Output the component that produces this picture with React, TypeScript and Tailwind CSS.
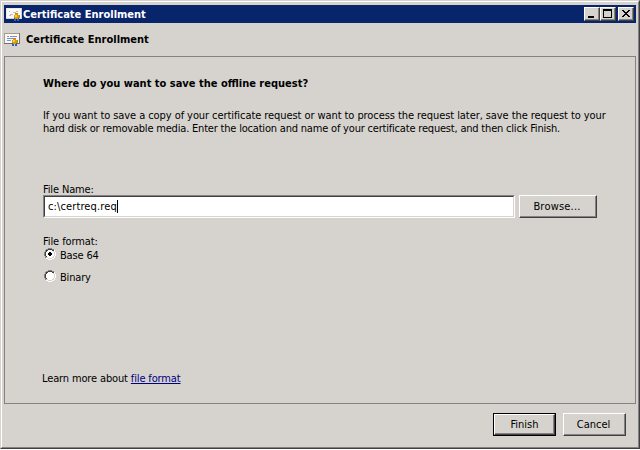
import React from "react";

function CertificateIcon({ framed = false, className = "" }: { framed?: boolean; className?: string }) {
  return (
    <svg viewBox="0 0 16 15" width="16" height="15" shapeRendering="crispEdges" className={`shrink-0 ${className}`}>
      <rect x="0" y="1" width="16" height="11" fill={framed ? "#777065" : "#d8d0c8"} />
      <rect x="0" y="1" width="15" height="10" fill={framed ? "#a59c8a" : "#eee8e2"} />
      <rect x="1" y="2" width="14" height="9" fill="#faf9f8" />
      {framed ? (
        <path d="M3 4h2M6 4h7M3 6h6M10 6h2M3 8h4" stroke="#7c92d0" transform="translate(0 .5)" />
      ) : (
        <path d="M3 4h1M10 4h2M7 5h3M4 7h3M3 8h2" stroke="#c0bcc4" transform="translate(0 .5)" />
      )}
      <path d="M8 11h2v3H8zM11 11h2v3h-2z" fill="#2c62b4" />
      <path d="M9 7h3v1h1v3h-1v1H9v-1H8V8h1z" fill="#dc980c" />
      <path d="M9 6h3v1H9zM13 8h1v3h-1z" fill="#c98712" />
      <path d="M9 8h2v2H9z" fill="#ffca38" />
    </svg>
  );
}

function CaptionButton({ children, className = "" }: { children: React.ReactNode; className?: string }) {
  return (
    <button className={`h-[14px] w-4 border border-t-white border-l-white border-r-[#404040] border-b-[#404040] bg-[#d6d3ce] shadow-[inset_-1px_-1px_#848284] ${className}`}>
      <svg viewBox="0 0 14 12" width="14" height="12" shapeRendering="crispEdges">{children}</svg>
    </button>
  );
}

function Button({ children, className = "" }: { children: React.ReactNode; className?: string }) {
  return (
    <button className={`border border-t-white border-l-white border-r-[#404040] border-b-[#404040] bg-[#d6d3ce] text-center shadow-[inset_-1px_-1px_#848284] ${className}`}>
      {children}
    </button>
  );
}

function Radio({ label, checked = false }: { label: string; checked?: boolean }) {
  return (
    <label className="flex h-[13px] items-start">
      <svg viewBox="0 0 12 12" width="12" height="12" shapeRendering="crispEdges" className="-mt-px mr-1 ml-px shrink-0">
        <path d="M4 1h4v1h2v2h1v4h-1v2H8v1H4v-1H2V8H1V4h1V2h2z" fill="#fff" />
        <path d="M4 0h4v1H4zM2 1h2v1H2zM8 1h2v1H8zM1 2h1v2H1zM0 4h1v4H0zM1 8h1v2H1z" fill="#848284" />
        <path d="M4 1h4v1H4zM2 2h2v1H2zM8 2h2v1H8zM2 3h1v1H2zM1 4h1v4H1zM2 8h1v1H2z" fill="#404040" />
        <path d="M4 10h4v1H4zM2 9h2v1H2zM8 9h2v1H8zM9 8h1v1H9zM10 4h1v4h-1zM9 3h1v1H9z" fill="#d6d3ce" />
        <path d="M4 11h4v1H4zM2 10h2v1H2zM8 10h2v1H8zM10 8h1v2h-1zM11 4h1v4h-1zM10 2h1v2h-1z" fill="#fff" />
        {checked && <path d="M5 4h2v1h1v2H7v1H5V7H4V5h1z" fill="#000" />}
      </svg>
      <span className="tracking-[-0.17px]">{label}</span>
    </label>
  );
}

export default function App() {
  return (
    <main className="flex h-[449px] w-[640px] flex-col border border-t-[#d6d3ce] border-l-[#d6d3ce] border-r-[#404040] border-b-[#404040] bg-[#d6d3ce] font-['DejaVu_Sans_Condensed','DejaVu_Sans',sans-serif] text-[11px] leading-[13px] whitespace-nowrap text-black [font-stretch:condensed]">
      <div className="flex min-h-0 flex-1 flex-col border border-t-white border-l-white border-r-[#848284] border-b-[#848284] px-[2px] pt-[3px]">
        <header className="flex h-[18px] shrink-0 items-center bg-[#08246b] pr-[2px] pl-[2px] text-white">
          <CertificateIcon className="mt-px" />
          <h1 className="ml-px font-bold">Certificate Enrollment</h1>
          <div className="ml-auto flex">
            <CaptionButton><path d="M3 8h6v2H3z" /></CaptionButton>
            <CaptionButton><path d="M2 1h9v9H2zM3 3v6h7V3z" fillRule="evenodd" /></CaptionButton>
            <CaptionButton className="ml-[2px]">
              <path d="M3 2h2v1H3zM9 2h2v1H9zM4 3h2v1H4zM8 3h2v1H8zM5 4h4v1H5zM6 5h2v1H6zM5 6h4v1H5zM4 7h2v1H4zM8 7h2v1H8zM3 8h2v1H3zM9 8h2v1H9z" />
            </CaptionButton>
          </div>
        </header>
        <div className="flex h-[33px] shrink-0 items-center">
          <CertificateIcon framed />
          <h2 className="ml-[6px] font-bold">Certificate Enrollment</h2>
        </div>
        <section className="flex h-[348px] shrink-0 flex-col border border-[#848284] pt-[20px] pl-[38px]">
          <h3 className="font-bold">Where do you want to save the offline request?</h3>
          <p className="mt-[19px]">
            <span className="block tracking-[-0.075px]">If you want to save a copy of your certificate request or want to process the request later, save the request to your</span>
            <span className="block tracking-[-0.195px]">hard disk or removable media. Enter the location and name of your certificate request, and then click Finish.</span>
          </p>
          <div className="mt-[48px] h-3 tracking-[-0.15px]">File Name:</div>
          <div className="flex">
            <div className="h-[23px] w-[472px] border border-t-[#848284] border-l-[#848284] border-r-white border-b-white">
              <div className="flex h-full items-center border border-t-[#404040] border-l-[#404040] border-r-[#d6d3ce] border-b-[#d6d3ce] bg-white pl-[3px]">
                <span className="tracking-[0.12px]">c:\certreq.req</span>
                <span className="h-[13px] w-px bg-black" />
              </div>
            </div>
            <Button className="ml-1 h-[23px] w-[78px] pr-0.5 tracking-[0.2px]">Browse...</Button>
          </div>
          <div className="mt-[17px] tracking-[-0.1px]">File format:</div>
          <div className="mt-px"><Radio label="Base 64" checked /></div>
          <div className="mt-[9px]"><Radio label="Binary" /></div>
          <div className="mt-[88px] -ml-px tracking-[-0.14px]">
            Learn more about <a className="text-[#000084] underline decoration-1 underline-offset-1 [text-decoration-skip-ink:none]">file format</a>
          </div>
        </section>
        <footer className="mt-[9px] flex justify-end pr-[10px]">
          <div className="border border-black"><Button className="block h-[21px] w-[61px]">Finish</Button></div>
          <Button className="ml-[7px] h-[23px] w-[63px] pr-0.5">Cancel</Button>
        </footer>
      </div>
    </main>
  );
}
